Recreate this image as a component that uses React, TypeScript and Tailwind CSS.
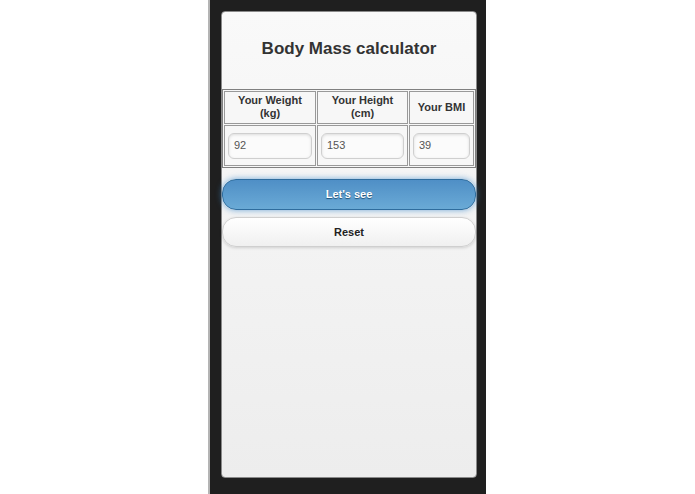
export default function App() {
  return (
    <div className="w-[695px] h-[494px] bg-white flex overflow-hidden" style={{ fontFamily: '"Liberation Sans", Arial, sans-serif' }}>
      <div className="ml-[208px] w-[2px] h-full bg-[#b4b4b4]" />
      <div className="w-[276px] h-full bg-[#1f1f1f] pl-[11px] pr-[9px] pt-[11px] pb-[16px]">
        <div className="h-full rounded-[4px] border border-[#8a8a8a] bg-gradient-to-b from-[#f9f9f9] to-[#ededed] flex flex-col">
          <h1 className="h-[77px] flex items-center justify-center pb-[3px] text-[17px] font-bold text-[#333]">
            Body Mass calculator
          </h1>
          <table className="w-[254px] border-separate border-spacing-[1px] border border-[#808080] bg-[#f7f7f7] text-[11px] text-[#333]">
            <tbody>
              <tr className="h-[33px]">
                <th className="w-[92px] border border-[#999] font-bold leading-[13px] pb-[2px]">Your Weight<br />(kg)</th>
                <th className="w-[91px] border border-[#999] font-bold leading-[13px] pb-[2px]">Your Height<br />(cm)</th>
                <th className="border border-[#999] font-bold">Your BMI</th>
              </tr>
              <tr className="h-[41px]">
                <td className="border border-[#999] px-[3px]">
                  <div className="h-[26px] rounded-[6px] border border-[#cfcfcf] bg-[#fbfbfb] shadow-[inset_0_1px_3px_rgba(0,0,0,0.12)] flex items-center px-[5px] text-[#555]">92</div>
                </td>
                <td className="border border-[#999] px-[3px]">
                  <div className="h-[26px] rounded-[6px] border border-[#cfcfcf] bg-[#fbfbfb] shadow-[inset_0_1px_3px_rgba(0,0,0,0.12)] flex items-center px-[5px] text-[#555]">153</div>
                </td>
                <td className="border border-[#999] px-[3px]">
                  <div className="h-[26px] rounded-[6px] border border-[#cfcfcf] bg-[#fbfbfb] shadow-[inset_0_1px_3px_rgba(0,0,0,0.12)] flex items-center px-[5px] text-[#555]">39</div>
                </td>
              </tr>
            </tbody>
          </table>
          <div className="mt-[11px] flex flex-col gap-[7px] w-[254px]">
            <button className="h-[31px] rounded-[14px] border border-[#2f6d9e] bg-gradient-to-b from-[#4f8fc6] to-[#6aaad6] text-white text-[11px] font-bold [text-shadow:0_1px_1px_#1d4f75] shadow-[0_0_6px_rgba(56,136,204,0.7)]">
              Let's see
            </button>
            <button className="h-[30px] rounded-[14px] border border-[#cfcfcf] bg-gradient-to-b from-white to-[#f0f0f0] text-[#222] text-[11px] font-bold shadow-[0_1px_3px_rgba(0,0,0,0.15)]">
              Reset
            </button>
          </div>
        </div>
      </div>
    </div>
  );
}
